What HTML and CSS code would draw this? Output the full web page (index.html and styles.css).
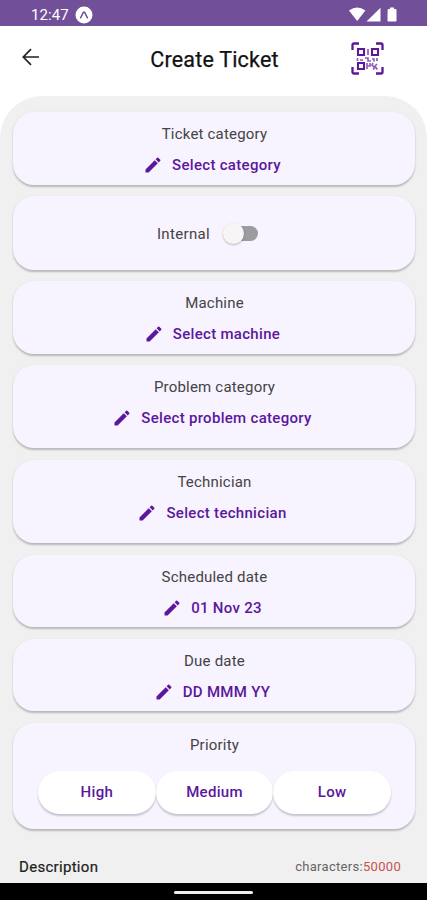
FILE: index.html
```
<!DOCTYPE html>
<html lang="en">
<head>
<meta charset="utf-8">
<title>Create Ticket</title>
<link rel="stylesheet" href="styles.css">
</head>
<body>
<svg class="defs" width="0" height="0"><symbol id="pencil" viewBox="0 0 24 24"><path d="M3 17.25V21h3.75L17.81 9.94l-3.75-3.75L3 17.25zM20.71 7.04a1 1 0 0 0 0-1.41l-2.34-2.34a1 1 0 0 0-1.41 0l-1.83 1.83 3.75 3.75 1.83-1.83z"/></symbol></svg>
<div class="screen">
  <div class="status">
    <span class="time">12:47</span>
    <svg class="badge" width="18" height="18" viewBox="0 0 18 18"><circle cx="9" cy="9" r="8.500" fill="#fff"/><path d="M5.600 11.800 8.300 6.500Q9 5.500 9.700 6.500L12.400 11.800" fill="none" stroke="#725099" stroke-width="1.500" stroke-linecap="round"/></svg>
    <svg class="signals" width="50" height="16" viewBox="0 0 50 16" fill="#fff"><path d="M0 3.600Q8.200-2.600 16.400 3.600L8.200 14z"/><path d="M17.500 14.500 31.500 .8V14.500z"/><path d="M38.600 3Q38.600 2 39.600 2H41V.6H45V2h1.500q1 0 1 1V13.500q0 1-1 1h-7q-1 0-1-1z"/></svg>
  </div>
  <header class="header">
    <svg class="back" width="18" height="18" viewBox="0 0 18 18" fill="none" stroke="#222" stroke-width="1.700"><path d="M17 9H1.500M9 1.200 1.300 9 9 16.800"/></svg>
    <h1 class="title">Create Ticket</h1>
    <svg class="qr" width="33" height="33" viewBox="0 0 33 33" fill="none" stroke="#5b189b">
      <path stroke-width="2.300" d="M1.500 8V3Q1.500 1.500 3 1.500H8M25 1.500h5q1.500 0 1.500 1.500v5M31.500 25v5q0 1.500-1.500 1.500h-5M8 31.500H3Q1.500 31.500 1.500 30v-5"/>
      <path stroke-width="2.100" d="M7 7h6v6H7zM21 7h6v6h-6zM7 21h6v6H7z"/>
      <path stroke-width="1.700" opacity=".7" d="M17 7v6M6.500 16v3M9 18h3M14 16h3v3h3M21 17h2v2.500M26 16V19M16 21v6M19 21v3h-2M22 21l-1 2 2 2 3-3M22 27.500l2.500-2.500 2 2.500"/>
    </svg>
  </header>
  <main class="content">
    <section class="card"><div class="label">Ticket category</div><div class="link"><svg class="pencil"><use href="#pencil"/></svg><span>Select category</span></div></section>
    <section class="card toggle-card"><span>Internal</span><div class="switch"><div class="knob"></div></div></section>
    <section class="card"><div class="label">Machine</div><div class="link"><svg class="pencil"><use href="#pencil"/></svg><span>Select machine</span></div></section>
    <section class="card tall"><div class="label">Problem category</div><div class="link"><svg class="pencil"><use href="#pencil"/></svg><span>Select problem category</span></div></section>
    <section class="card tall"><div class="label">Technician</div><div class="link"><svg class="pencil"><use href="#pencil"/></svg><span>Select technician</span></div></section>
    <section class="card"><div class="label">Scheduled date</div><div class="link"><svg class="pencil"><use href="#pencil"/></svg><span>01 Nov 23</span></div></section>
    <section class="card"><div class="label">Due date</div><div class="link"><svg class="pencil"><use href="#pencil"/></svg><span>DD MMM YY</span></div></section>
    <section class="card priority"><div class="label">Priority</div><div class="pills"><div class="pill">High</div><div class="pill">Medium</div><div class="pill">Low</div></div></section>
    <div class="description"><span class="desc">Description</span><span class="chars">characters:<span class="count">50000</span></span></div>
  </main>
  <div class="navbar"><div class="handle"></div></div>
</div>
</body>
</html>
```

FILE: styles.css
```
* { box-sizing: border-box; }
body { margin: 0; background: #fff; font-family: Roboto, "Liberation Sans", sans-serif; }
.defs { display: block; }
.screen { width: 427px; height: 900px; display: flex; flex-direction: column; overflow: hidden; }
.status { height: 26px; background: #725099; display: flex; align-items: center; padding: 3px 28px 0 31px; color: #fff; }
.time { font-size: 15px; letter-spacing: 0.1px; }
.badge { margin-left: 6px; }
.signals { margin-left: auto; }
.header { height: 70px; display: flex; align-items: center; padding: 0 43px 0 22px; justify-content: space-between; }
.back { margin-top: -8px; }
.title { margin: -3px 0 0 38px; font-size: 21.500px; font-weight: 400; line-height: 28px; letter-spacing: 0.2px; color: #111; -webkit-text-stroke: 0.25px #111; }
.qr { margin-top: -6px; }
.content { flex: 1; background: #f0f0f0; border-radius: 42px 42px 0 0; padding: 16px 12px 0 13px; display: flex; flex-direction: column; gap: 11.500px; }
.card { height: 72.500px; flex: none; background: #f7f3ff; border-radius: 21px; box-shadow: 0 1.500px 2px rgba(0,0,0,.23); padding-top: 12px; font-size: 15px; color: #444; }
.card.tall { height: 83.300px; }
.label { text-align: center; line-height: 20px; letter-spacing: 0.2px; padding-left: 1px; }
.link { margin-top: 11px; height: 20px; display: flex; align-items: center; justify-content: center; gap: 9px; color: #5b189b; font-weight: 500; letter-spacing: 0.300px; padding-right: 4px; }
.pencil { width: 20px; height: 20px; fill: #5b189b; }
.toggle-card { height: 73.500px; padding: 2px 13px 0 0; display: flex; align-items: center; justify-content: center; gap: 15px; letter-spacing: .35px; }
.switch { width: 33px; height: 15px; border-radius: 8px; background: #9c9b9f; display: flex; align-items: center; }
.knob { width: 21px; height: 21px; flex: none; margin-left: -2px; border-radius: 50%; background: #f7f5f6; box-shadow: 0 1px 2px rgba(0,0,0,.25); }
.priority { height: 106.500px; }
.pills { display: flex; margin: 16px 24px 0 25px; }
.pill { flex: 1; height: 43px; border-radius: 22px; background: #fff; box-shadow: 0 2px 2px rgba(0,0,0,.2); display: flex; align-items: center; justify-content: center; color: #5b189b; font-weight: 500; letter-spacing: .3px; }
.description { display: flex; justify-content: space-between; align-items: center; height: 20px; margin-top: 16px; padding: 0 14px 0 6px; color: #222; }
.desc { font-size: 15px; letter-spacing: .3px; -webkit-text-stroke: 0.2px #222; }
.chars { font-size: 13px; color: #666; letter-spacing: .3px; }
.count { color: #c95050; }
.navbar { height: 17px; background: #000; display: flex; align-items: center; justify-content: center; }
.handle { width: 79px; height: 3px; border-radius: 2px; background: #eee; margin-top: 1px; }
```
